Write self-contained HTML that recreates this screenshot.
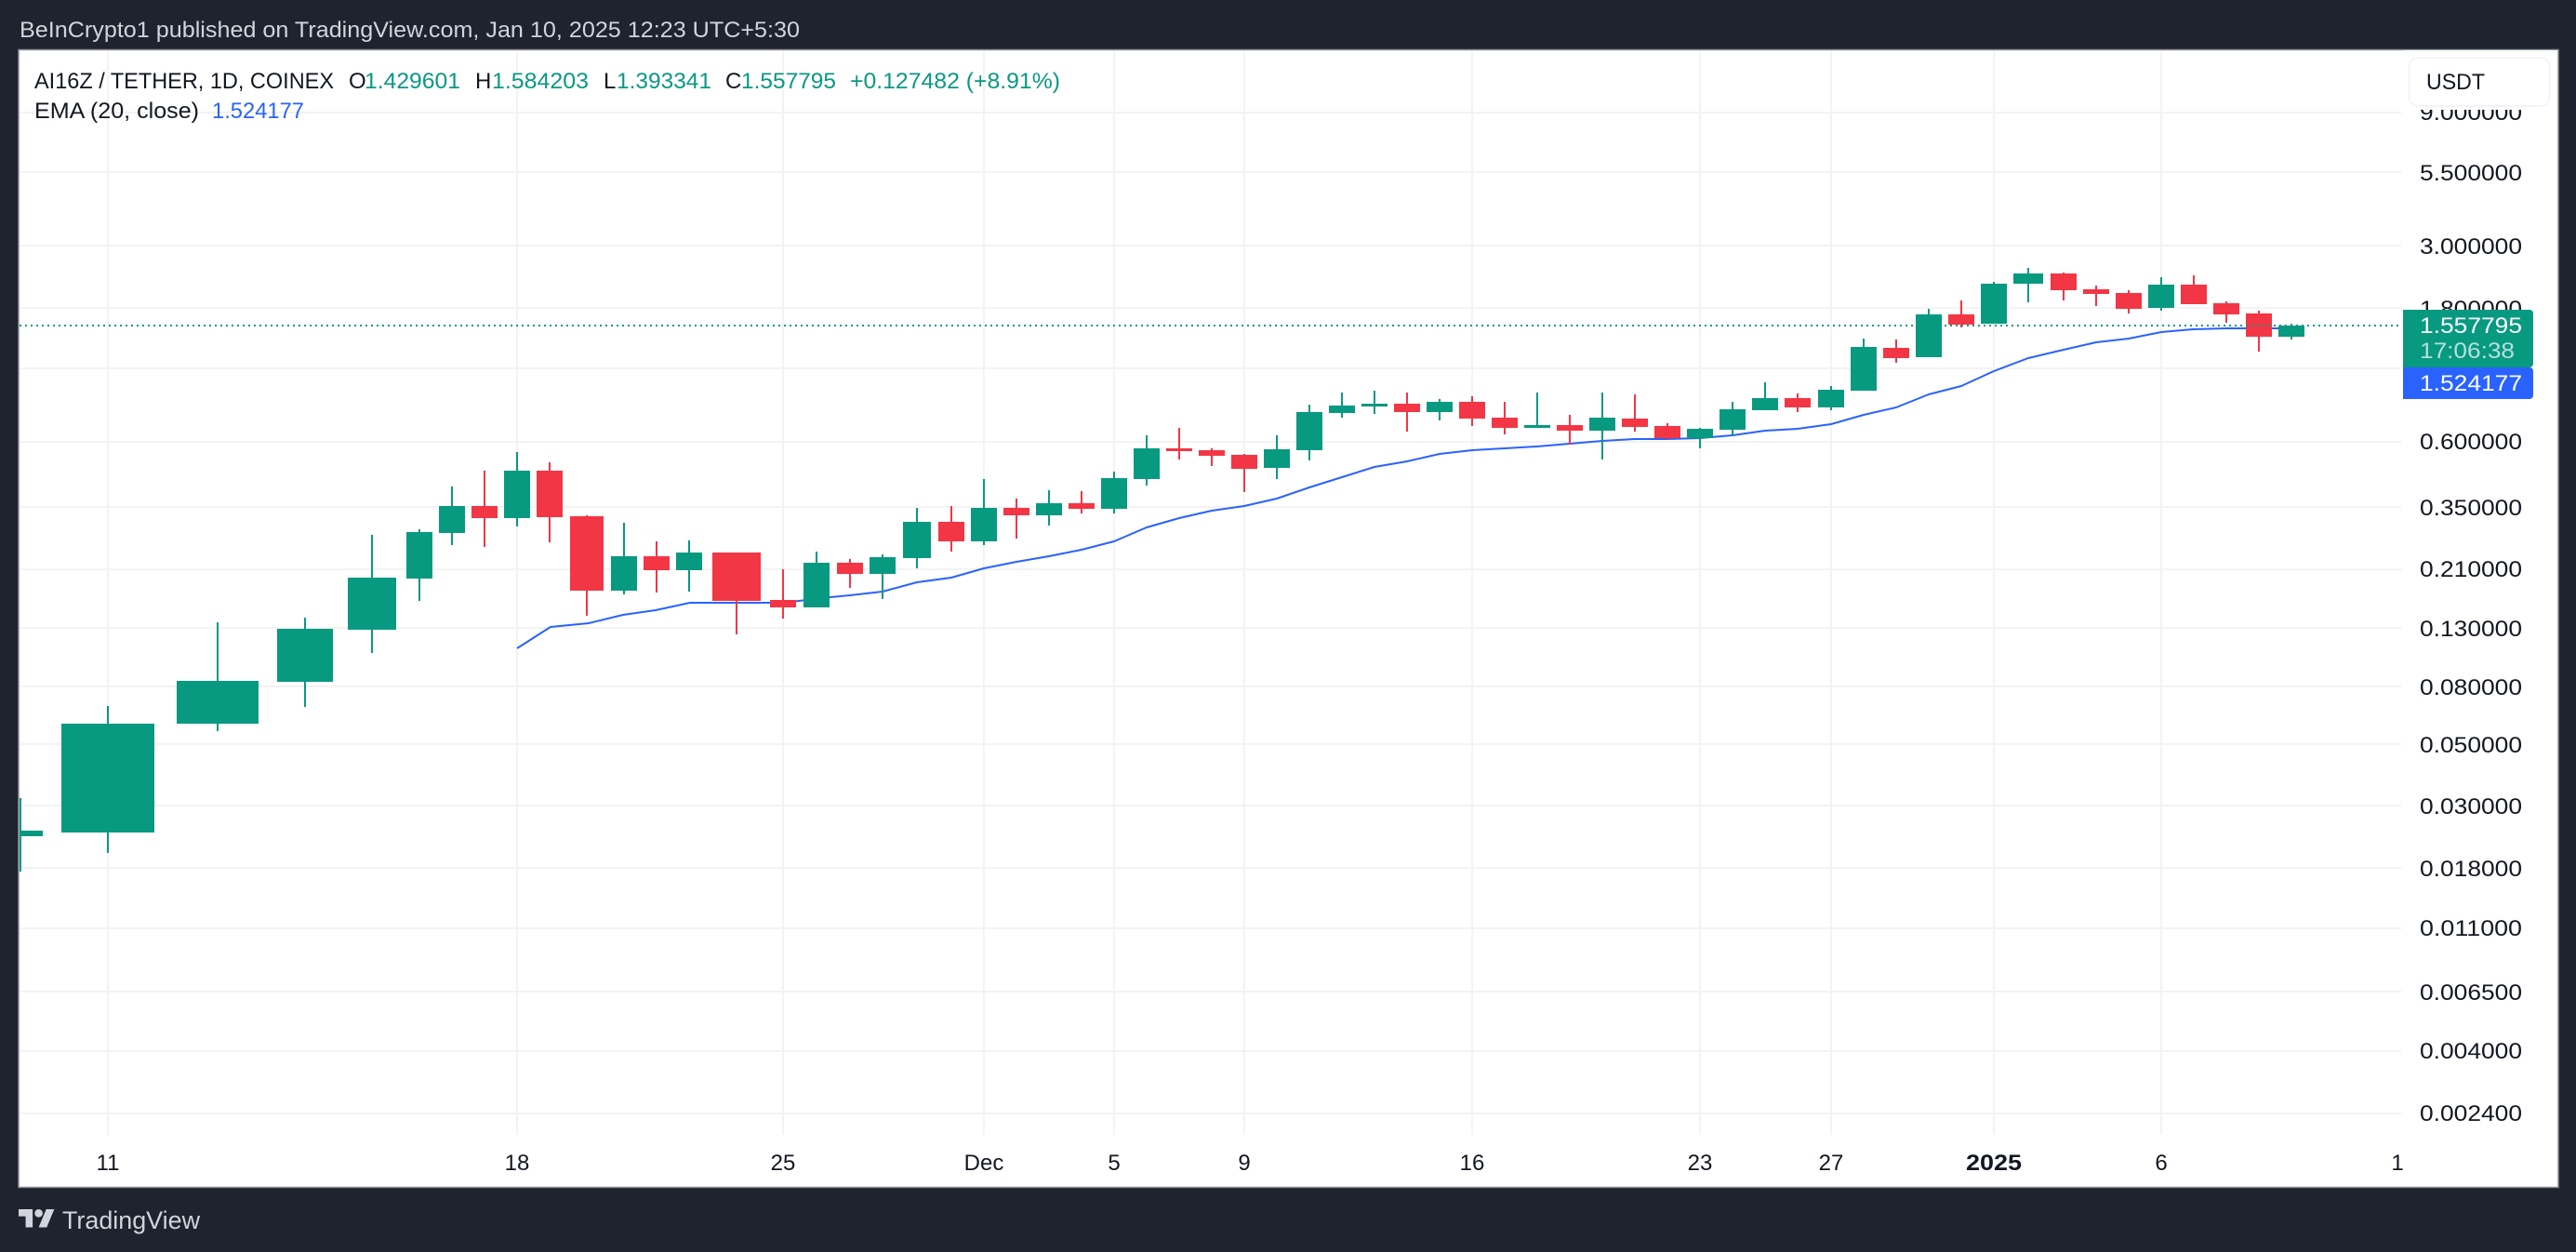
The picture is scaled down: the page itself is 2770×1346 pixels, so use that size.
<!DOCTYPE html>
<html lang="en">
<head>
<meta charset="utf-8">
<title>AI16Z / TETHER chart</title>
<style>
html,body{margin:0;padding:0;width:2770px;height:1346px;overflow:hidden;background:#1e232e}
svg{display:block}
text{font-family:"Liberation Sans",sans-serif;font-size:24px;fill:#131722}
</style>
</head>
<body>
<svg xmlns="http://www.w3.org/2000/svg" width="2770" height="1346" viewBox="0 0 2770 1346">
<rect width="2770" height="1346" fill="#1e232e"/>
<rect x="20" y="53.5" width="2731" height="1223" fill="#fff" stroke="#8a8d96" stroke-width="1.5"/>
<g stroke="#f3f3f4" stroke-width="2" shape-rendering="crispEdges">
<path d="M21 121H2582M21 185H2582M21 264H2582M21 331H2582M21 396H2582M21 475H2582M21 545H2582M21 612H2582M21 675H2582M21 738H2582M21 800H2582M21 866H2582M21 933H2582M21 998H2582M21 1066H2582M21 1130H2582M21 1197H2582"/>
<path d="M116 55V1220M556 55V1220M842 55V1220M1058 55V1220M1198 55V1220M1338 55V1220M1583 55V1220M1828 55V1220M1969 55V1220M2144 55V1220M2324 55V1220"/>
</g>
<polyline fill="none" stroke="#2962ff" stroke-width="2" stroke-linejoin="round" points="556,697 592,674 633,670 670,661 705,656 742,648 792,648 842,648 893,642 914,640 949,636 986,626 1023,621 1058,611 1093,604 1128,598 1163,591 1198,582 1233,567 1268,557 1303,549 1338,544 1373,536 1408,524 1443,513 1478,502 1513,496 1548,488 1583,484 1618,482 1653,480 1688,477 1723,474 1758,472 1793,472 1828,471 1863,468 1898,463 1933,461 1969,456 2004,446 2039,438 2074,424 2109,415 2144,399 2181,385 2219,376 2254,368 2289,364 2324,357 2358,354 2394,353 2429,353 2464,353"/>
<path shape-rendering="crispEdges" fill="#089981" d="M21 858h2V937h-2zM21 893H46V899H21zM115 759h2V917h-2zM66 778H166V895H66zM233 669h2V786h-2zM190 732H278V778H190zM327 664h2V760h-2zM298 676H358V733H298zM399 575h2V702h-2zM374 621H426V677H374zM450 569h2V646h-2zM437 572H465V622H437zM485 523h2V586h-2zM472 544H500V573H472zM555 486h2V566h-2zM542 506H570V557H542zM670 562h2V639h-2zM657 598H685V635H657zM740 581h2V636h-2zM727 594H755V613H727zM877 593h2V653h-2zM864 605H892V653H864zM948 596h2V644h-2zM935 599H963V617H935zM985 546h2V611h-2zM971 561H1001V600H971zM1057 515h2V586h-2zM1044 546H1072V582H1044zM1127 527h2V565h-2zM1114 541H1142V554H1114zM1197 507h2V552h-2zM1184 514H1212V547H1184zM1232 468h2V522h-2zM1219 482H1247V515H1219zM1372 468h2V515h-2zM1359 483H1387V503H1359zM1407 435h2V495h-2zM1394 443H1422V484H1394zM1442 422h2V449h-2zM1429 436H1457V444H1429zM1477 420h2V445h-2zM1464 434H1492V437H1464zM1547 429h2V452h-2zM1534 432H1562V443H1534zM1652 422h2V460h-2zM1639 457H1667V460H1639zM1722 422h2V494h-2zM1709 449H1737V463H1709zM1827 460h2V482h-2zM1814 461H1842V471H1814zM1862 432h2V468h-2zM1849 440H1877V462H1849zM1897 411h2V441h-2zM1884 428H1912V441H1884zM1968 415h2V441h-2zM1955 419H1983V438H1955zM2003 364h2V420h-2zM1990 373H2018V420H1990zM2073 332h2V384h-2zM2060 338H2088V384H2060zM2143 303h2V348h-2zM2130 305H2158V348H2130zM2180 288h2V325h-2zM2165 294H2197V305H2165zM2323 298h2V334h-2zM2310 306H2338V331H2310zM2463 348h2V365h-2zM2450 350H2478V362H2450z"/>
<path shape-rendering="crispEdges" fill="#f23645" d="M520 506h2V588h-2zM507 544H535V557H507zM590 497h2V583h-2zM577 506H605V556H577zM630 554h2V662h-2zM613 555H649V635H613zM705 582h2V637h-2zM692 598H720V613H692zM791 594h2V682h-2zM766 594H818V646H766zM841 612h2V665h-2zM828 645H856V653H828zM913 601h2V632h-2zM900 605H928V617H900zM1022 544h2V593h-2zM1009 561H1037V582H1009zM1092 536h2V579h-2zM1079 546H1107V554H1079zM1162 528h2V552h-2zM1149 541H1177V547H1149zM1267 460h2V494h-2zM1254 482H1282V485H1254zM1302 482h2V501h-2zM1289 484H1317V490H1289zM1337 488h2V529h-2zM1324 489H1352V504H1324zM1512 422h2V464h-2zM1499 434H1527V443H1499zM1582 426h2V458h-2zM1569 432H1597V450H1569zM1617 432h2V467h-2zM1604 449H1632V460H1604zM1687 446h2V478h-2zM1674 457H1702V463H1674zM1757 424h2V464h-2zM1744 450H1772V459H1744zM1792 455h2V473h-2zM1779 458H1807V471H1779zM1932 423h2V443h-2zM1919 428H1947V438H1919zM2038 365h2V390h-2zM2025 374H2053V385H2025zM2108 323h2V352h-2zM2095 338H2123V349H2095zM2218 293h2V323h-2zM2205 294H2233V312H2205zM2253 307h2V329h-2zM2240 311H2268V316H2240zM2288 312h2V337h-2zM2275 315H2303V332H2275zM2358 296h2V327h-2zM2345 306H2373V327H2345zM2393 324h2V347h-2zM2380 326H2408V338H2380zM2428 334h2V378h-2zM2415 337H2443V362H2415z"/>
<path d="M21 350H2581" stroke="#089981" stroke-width="2" stroke-dasharray="2 4" fill="none" shape-rendering="crispEdges"/>

<g>
<text x="2602" y="129" textLength="110" lengthAdjust="spacingAndGlyphs">9.000000</text>
<text x="2602" y="194" textLength="110" lengthAdjust="spacingAndGlyphs">5.500000</text>
<text x="2602" y="273" textLength="110" lengthAdjust="spacingAndGlyphs">3.000000</text>
<text x="2602" y="340" textLength="110" lengthAdjust="spacingAndGlyphs">1.800000</text>
<text x="2602" y="483" textLength="110" lengthAdjust="spacingAndGlyphs">0.600000</text>
<text x="2602" y="554" textLength="110" lengthAdjust="spacingAndGlyphs">0.350000</text>
<text x="2602" y="620" textLength="110" lengthAdjust="spacingAndGlyphs">0.210000</text>
<text x="2602" y="684" textLength="110" lengthAdjust="spacingAndGlyphs">0.130000</text>
<text x="2602" y="747" textLength="110" lengthAdjust="spacingAndGlyphs">0.080000</text>
<text x="2602" y="809" textLength="110" lengthAdjust="spacingAndGlyphs">0.050000</text>
<text x="2602" y="875" textLength="110" lengthAdjust="spacingAndGlyphs">0.030000</text>
<text x="2602" y="942" textLength="110" lengthAdjust="spacingAndGlyphs">0.018000</text>
<text x="2602" y="1006" textLength="110" lengthAdjust="spacingAndGlyphs">0.011000</text>
<text x="2602" y="1075" textLength="110" lengthAdjust="spacingAndGlyphs">0.006500</text>
<text x="2602" y="1138" textLength="110" lengthAdjust="spacingAndGlyphs">0.004000</text>
<text x="2602" y="1205" textLength="110" lengthAdjust="spacingAndGlyphs">0.002400</text>
</g>
<path d="M2584 54H2750V118H2584z" fill="#fff"/>
<rect x="2590.5" y="62" width="151" height="52" rx="10" fill="#fff" stroke="#f0f1f6" stroke-width="1.5"/>
<text x="2609" y="96" textLength="63" lengthAdjust="spacingAndGlyphs">USDT</text>
<path d="M2584 333H2720a4 4 0 0 1 4 4V391a4 4 0 0 1-4 4H2584z" fill="#089981"/>
<path d="M2584 395H2720a4 4 0 0 1 4 4V425a4 4 0 0 1-4 4H2584z" fill="#2962ff"/>
<text x="2602" y="358" textLength="110" lengthAdjust="spacingAndGlyphs" style="fill:#fff">1.557795</text>
<text x="2602" y="385" textLength="102" lengthAdjust="spacingAndGlyphs" style="fill:#b5e0d9">17:06:38</text>
<text x="2602" y="420" textLength="110" lengthAdjust="spacingAndGlyphs" style="fill:#fff">1.524177</text>

<g text-anchor="middle">
<text x="116" y="1258">11</text>
<text x="556" y="1258">18</text>
<text x="842" y="1258">25</text>
<text x="1058" y="1258">Dec</text>
<text x="1198" y="1258">5</text>
<text x="1338" y="1258">9</text>
<text x="1583" y="1258">16</text>
<text x="1828" y="1258">23</text>
<text x="1969" y="1258">27</text>
<text x="2144" y="1258" textLength="60" lengthAdjust="spacingAndGlyphs" style="font-weight:bold">2025</text>
<text x="2324" y="1258">6</text>
<text x="2578" y="1258">1</text>
</g>

<text x="21" y="40" textLength="839" lengthAdjust="spacingAndGlyphs" style="fill:#d1d4dc;font-size:24px">BeInCrypto1 published on TradingView.com, Jan 10, 2025 12:23 UTC+5:30</text>

<text x="37" y="95" textLength="322" lengthAdjust="spacingAndGlyphs" style="font-size:24px">AI16Z / TETHER, 1D, COINEX</text>
<text x="375" y="95" style="font-size:24px">O</text>
<text x="392" y="95" textLength="103" lengthAdjust="spacingAndGlyphs" style="fill:#089981;font-size:24px">1.429601</text>
<text x="511" y="95" style="font-size:24px">H</text>
<text x="529" y="95" textLength="104" lengthAdjust="spacingAndGlyphs" style="fill:#089981;font-size:24px">1.584203</text>
<text x="649" y="95" style="font-size:24px">L</text>
<text x="663" y="95" textLength="102" lengthAdjust="spacingAndGlyphs" style="fill:#089981;font-size:24px">1.393341</text>
<text x="780" y="95" style="font-size:24px">C</text>
<text x="797" y="95" textLength="102" lengthAdjust="spacingAndGlyphs" style="fill:#089981;font-size:24px">1.557795</text>
<text x="914" y="95" textLength="226" lengthAdjust="spacingAndGlyphs" style="fill:#089981;font-size:24px">+0.127482 (+8.91%)</text>
<text x="37" y="127" textLength="177" lengthAdjust="spacingAndGlyphs" style="font-size:24px">EMA (20, close)</text>
<text x="228" y="127" textLength="99" lengthAdjust="spacingAndGlyphs" style="fill:#2962ff;font-size:24px">1.524177</text>

<g transform="translate(20 1295.7) scale(1.08)" fill="#d1d4dc">
<path d="M14 22H7V11H0V4h14v18zM28 22h-8l7.5-18h8L28 22z"/>
<circle cx="20" cy="8" r="4"/>
</g>
<text x="67" y="1321" textLength="148" lengthAdjust="spacingAndGlyphs" style="fill:#d1d4dc;font-size:27px">TradingView</text>
</svg>
</body>
</html>
